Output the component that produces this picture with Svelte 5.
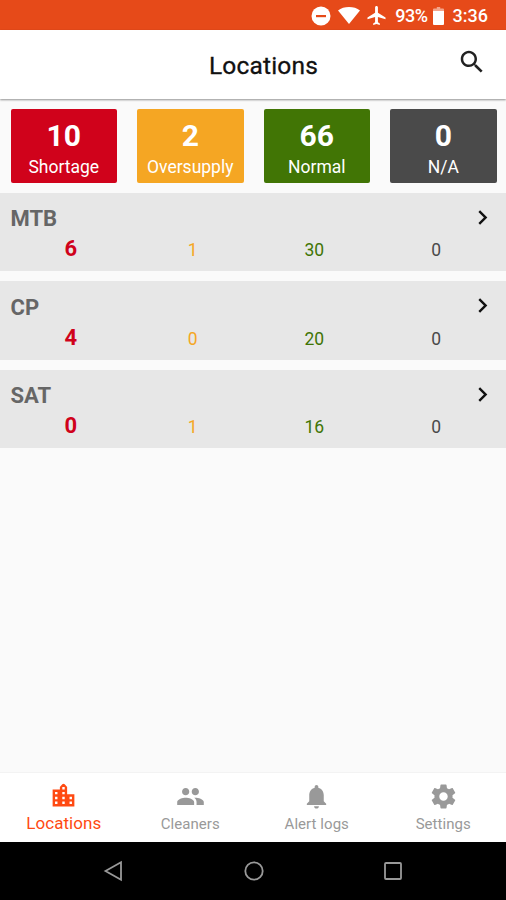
<script lang="ts">
  interface Location {
    name: string;
    shortage: number;
    oversupply: number;
    normal: number;
    na: number;
  }

  const locations: Location[] = [
    { name: 'MTB', shortage: 6, oversupply: 1, normal: 30, na: 0 },
    { name: 'CP', shortage: 4, oversupply: 0, normal: 20, na: 0 },
    { name: 'SAT', shortage: 0, oversupply: 1, normal: 16, na: 0 },
  ];

  const kinds = [
    { key: 'shortage', label: 'Shortage' },
    { key: 'oversupply', label: 'Oversupply' },
    { key: 'normal', label: 'Normal' },
    { key: 'na', label: 'N/A' },
  ] as const;

  const totals = $derived(
    kinds.map((kind) => ({
      ...kind,
      total: locations.reduce((sum, location) => sum + location[kind.key], 0),
    })),
  );

  const tabs = [
    {
      id: 'locations',
      label: 'Locations',
      icon: 'M15 11V5l-2-2.3q-1-1-2 0L9 5v2H3v14h18V11h-6zm-8 8H5v-2h2v2zm0-4H5v-2h2v2zm0-4H5V9h2v2zm6 8h-2v-2h2v2zm0-4h-2v-2h2v2zm0-4h-2V9h2v2zm0-4h-2V5h2v2zm6 12h-2v-2h2v2zm0-4h-2v-2h2v2z',
    },
    {
      id: 'cleaners',
      label: 'Cleaners',
      icon: 'M16 11c1.66 0 2.99-1.34 2.99-3S17.66 5 16 5c-1.66 0-3 1.34-3 3s1.34 3 3 3zm-8 0c1.66 0 2.99-1.34 2.99-3S9.66 5 8 5C6.34 5 5 6.34 5 8s1.34 3 3 3zm0 2c-2.33 0-7 1.17-7 3.5V19h14v-2.5c0-2.33-4.67-3.5-7-3.5zm8 0c-.29 0-.62.02-.97.05 1.16.84 1.97 1.97 1.97 3.45V19h6v-2.5c0-2.33-4.67-3.5-7-3.5z',
    },
    {
      id: 'alerts',
      label: 'Alert logs',
      icon: 'M12 22c1.1 0 2-.9 2-2h-4c0 1.1.89 2 2 2zm6-6v-5c0-3.07-1.64-5.64-4.5-6.32V4c0-.83-.67-1.5-1.5-1.5s-1.5.67-1.5 1.5v.68C7.63 5.36 6 7.92 6 11v5l-2 2v1h16v-1l-2-2z',
    },
    {
      id: 'settings',
      label: 'Settings',
      icon: 'M19.43 12.98c.04-.32.07-.64.07-.98s-.03-.66-.07-.98l2.11-1.65c.19-.15.24-.42.12-.64l-2-3.46c-.12-.22-.39-.3-.61-.22l-2.49 1c-.52-.4-1.08-.73-1.69-.98l-.38-2.65C14.46 2.18 14.25 2 14 2h-4c-.25 0-.46.18-.49.42l-.38 2.65c-.61.25-1.17.59-1.69.98l-2.49-1c-.23-.09-.49 0-.61.22l-2 3.46c-.13.22-.07.49.12.64l2.11 1.65c-.04.32-.07.65-.07.98s.03.66.07.98l-2.11 1.65c-.19.15-.24.42-.12.64l2 3.46c.12.22.39.3.61.22l2.49-1c.52.4 1.08.73 1.69.98l.38 2.65c.03.24.24.42.49.42h4c.25 0 .46-.18.49-.42l.38-2.65c.61-.25 1.17-.59 1.69-.98l2.49 1c.23.09.49 0 .61-.22l2-3.46c.12-.22.07-.49-.12-.64l-2.11-1.65zM12 15.5c-1.93 0-3.5-1.57-3.5-3.5s1.57-3.5 3.5-3.5 3.5 1.57 3.5 3.5-1.57 3.5-3.5 3.5z',
    },
  ];

  let activeTab = $state('locations');
</script>

<div class="screen">
  <div class="status-bar">
    <svg class="dnd" viewBox="0 0 20 20" aria-hidden="true">
      <circle cx="10" cy="10" r="9.5" />
      <rect class="dnd-bar" x="5" y="9" width="10" height="2.2" />
    </svg>
    <svg class="wifi" viewBox="0 0 22 17" aria-hidden="true">
      <path d="M0 3.4C3 1.1 6.8 0 11 0s8 1.1 11 3.4L11 17z" />
    </svg>
    <svg class="plane" viewBox="2 2 19 20" aria-hidden="true">
      <path d="M21 16v-2l-8-5V3.5c0-.83-.67-1.5-1.5-1.5S10 2.67 10 3.5V9l-8 5v2l8-2.5V19l-2 1.5V22l3.5-1 3.5 1v-1.5L13 19v-5.5l8 2.5z" />
    </svg>
    <span class="percent">93%</span>
    <svg class="battery" viewBox="0 0 11 18" aria-hidden="true">
      <path class="battery-cap" d="M1 1.5h2.8V0h3.4v1.5H10a1 1 0 0 1 1 1V5H0V2.5a1 1 0 0 1 1-1z" />
      <path d="M0 4h11v13a1 1 0 0 1-1 1H1a1 1 0 0 1-1-1z" />
    </svg>
    <span class="clock">3:36</span>
  </div>

  <header class="app-bar">
    <h1>Locations</h1>
    <button class="search" aria-label="Search">
      <svg viewBox="0 0 24 24" aria-hidden="true">
        <path d="M15.5 14h-.79l-.28-.27C15.41 12.59 16 11.11 16 9.5 16 5.91 13.09 3 9.5 3S3 5.91 3 9.5 5.91 16 9.5 16c1.61 0 3.09-.59 4.23-1.57l.27.28v.79l5 4.99L20.49 19l-4.99-5zm-6 0C7.01 14 5 11.99 5 9.5S7.01 5 9.5 5 14 7.01 14 9.5 11.99 14 9.5 14z" />
      </svg>
    </button>
  </header>

  <main>
    <section class="totals">
      {#each totals as { key, label, total } (key)}
        <div class="total-card bg-{key}">
          <span class="total-value">{total}</span>
          <span class="total-label">{label}</span>
        </div>
      {/each}
    </section>

    <section class="location-list">
      {#each locations as location (location.name)}
        <div class="location-row">
          <div class="location-head">
            <span class="location-name">{location.name}</span>
            <svg class="chevron" viewBox="0 0 24 24" aria-hidden="true">
              <path d="M10 6L8.59 7.41 13.17 12l-4.58 4.59L10 18l6-6z" />
            </svg>
          </div>
          <div class="counts">
            {#each kinds as { key } (key)}
              <span class="count text-{key}">{location[key]}</span>
            {/each}
          </div>
        </div>
      {/each}
    </section>
  </main>

  <nav class="tab-bar">
    {#each tabs as tab (tab.id)}
      <button class="tab" class:active={activeTab === tab.id} onclick={() => (activeTab = tab.id)}>
        <svg viewBox="0 0 24 24" aria-hidden="true"><path d={tab.icon} /></svg>
        <span>{tab.label}</span>
      </button>
    {/each}
  </nav>

  <div class="system-nav">
    <svg viewBox="0 0 24 24" aria-hidden="true"><path d="M3.5 12L19 3.3v17.4z" /></svg>
    <svg viewBox="0 0 24 24" aria-hidden="true"><circle cx="12" cy="12" r="8.7" /></svg>
    <svg viewBox="0 0 24 24" aria-hidden="true"><rect x="4" y="4" width="16" height="16" rx="1" /></svg>
  </div>
</div>

<style>
  :global(body) {
    margin: 0;
  }

  .screen {
    display: flex;
    flex-direction: column;
    width: 506px;
    height: 900px;
    overflow: hidden;
    background: #fafafa;
    font-family: Roboto, 'Liberation Sans', sans-serif;
  }

  button {
    margin: 0;
    padding: 0;
    border: 0;
    background: none;
    font: inherit;
    cursor: pointer;
  }

  .status-bar {
    display: flex;
    align-items: center;
    justify-content: flex-end;
    flex: none;
    box-sizing: border-box;
    height: 30px;
    padding: 1px 18px 0 0;
    background: #e64a19;
    color: #fff;
    font-size: 18px;
    font-weight: 500;
  }

  .status-bar svg {
    fill: #fff;
  }

  .dnd {
    width: 20px;
    height: 20px;
    margin-right: 7px;
  }

  .status-bar .dnd-bar {
    fill: #e64a19;
  }

  .wifi {
    width: 22px;
    height: 17px;
    margin-right: 7px;
  }

  .plane {
    width: 19px;
    height: 19px;
    margin-right: 9px;
  }

  .percent {
    margin-right: 5px;
    letter-spacing: -0.5px;
  }

  .battery {
    width: 11px;
    height: 18px;
    margin-right: 9px;
  }

  .status-bar .battery-cap {
    fill: #f3a58c;
  }

  .app-bar {
    display: flex;
    align-items: center;
    flex: none;
    z-index: 1;
    box-sizing: border-box;
    height: 69px;
    padding: 0 19px 0 70px;
    background: #fff;
    box-shadow: 0 1px 2px rgba(0, 0, 0, 0.42);
  }

  h1 {
    flex: 1;
    margin: 2px 0 0;
    color: #111;
    font-size: 24.5px;
    font-weight: 400;
    letter-spacing: 0.2px;
    line-height: 30px;
    text-align: center;
    -webkit-text-stroke: 0.3px #111;
  }

  .search {
    height: 30px;
    margin-bottom: 5px;
  }

  .search svg {
    display: block;
    width: 30px;
    height: 30px;
    fill: #222;
  }

  main {
    flex: 1;
    min-height: 0;
  }

  .totals {
    display: grid;
    grid-template-columns: repeat(4, 1fr);
    gap: 20px;
    padding: 10px 9.5px 9.5px 10.5px;
  }

  .total-card {
    display: flex;
    flex-direction: column;
    align-items: center;
    box-sizing: border-box;
    height: 74px;
    padding-top: 9px;
    border-radius: 2px;
    color: #fff;
  }

  .total-value {
    font-size: 30px;
    font-weight: 700;
    line-height: 35px;
  }

  .total-label {
    margin-top: 4px;
    font-size: 17.5px;
    line-height: 21px;
  }

  .bg-shortage {
    background: #d0021b;
  }

  .bg-oversupply {
    background: #f5a623;
  }

  .bg-normal {
    background: #417505;
  }

  .bg-na {
    background: #4a4a4a;
  }

  .location-list {
    display: flex;
    flex-direction: column;
    gap: 10px;
  }

  .location-row {
    box-sizing: border-box;
    height: 78.5px;
    padding: 9.5px 9px 0 10px;
    background: #e7e7e7;
  }

  .location-head {
    display: flex;
    align-items: center;
    justify-content: space-between;
    height: 30px;
  }

  .location-name {
    padding: 3px 0 0 0.5px;
    color: #666;
    font-size: 22px;
    font-weight: 700;
  }

  .chevron {
    width: 29px;
    height: 29px;
    fill: #111;
  }

  .counts {
    display: grid;
    grid-template-columns: repeat(4, 1fr);
    align-items: baseline;
    padding-top: 3px;
    text-align: center;
    line-height: 28px;
  }

  .count {
    font-size: 17.5px;
  }

  .text-shortage {
    color: #d0021b;
    font-size: 22px;
    font-weight: 700;
  }

  .text-oversupply {
    color: #f5a623;
  }

  .text-normal {
    color: #417505;
  }

  .text-na {
    color: #4a4a4a;
  }

  .tab-bar {
    display: grid;
    grid-template-columns: repeat(4, 1fr);
    flex: none;
    box-sizing: border-box;
    height: 70px;
    border-top: 1px solid #f3f3f3;
    background: #fff;
  }

  .tab {
    display: flex;
    flex-direction: column;
    align-items: center;
    padding: 9px 0 0 1px;
    color: #999;
    font-size: 15px;
    letter-spacing: 0.05px;
    line-height: 20px;
  }

  .tab svg {
    width: 29px;
    height: 29px;
    margin-bottom: 3px;
    fill: currentColor;
  }

  .tab.active {
    padding-top: 8px;
    color: #ff4a12;
    font-size: 17px;
  }

  .system-nav {
    display: flex;
    justify-content: space-between;
    align-items: center;
    flex: none;
    box-sizing: border-box;
    height: 58px;
    padding: 0 101px 0 102px;
    background: #000;
  }

  .system-nav svg {
    width: 24px;
    height: 24px;
    fill: none;
    stroke: #999;
    stroke-width: 1.8;
  }
</style>
